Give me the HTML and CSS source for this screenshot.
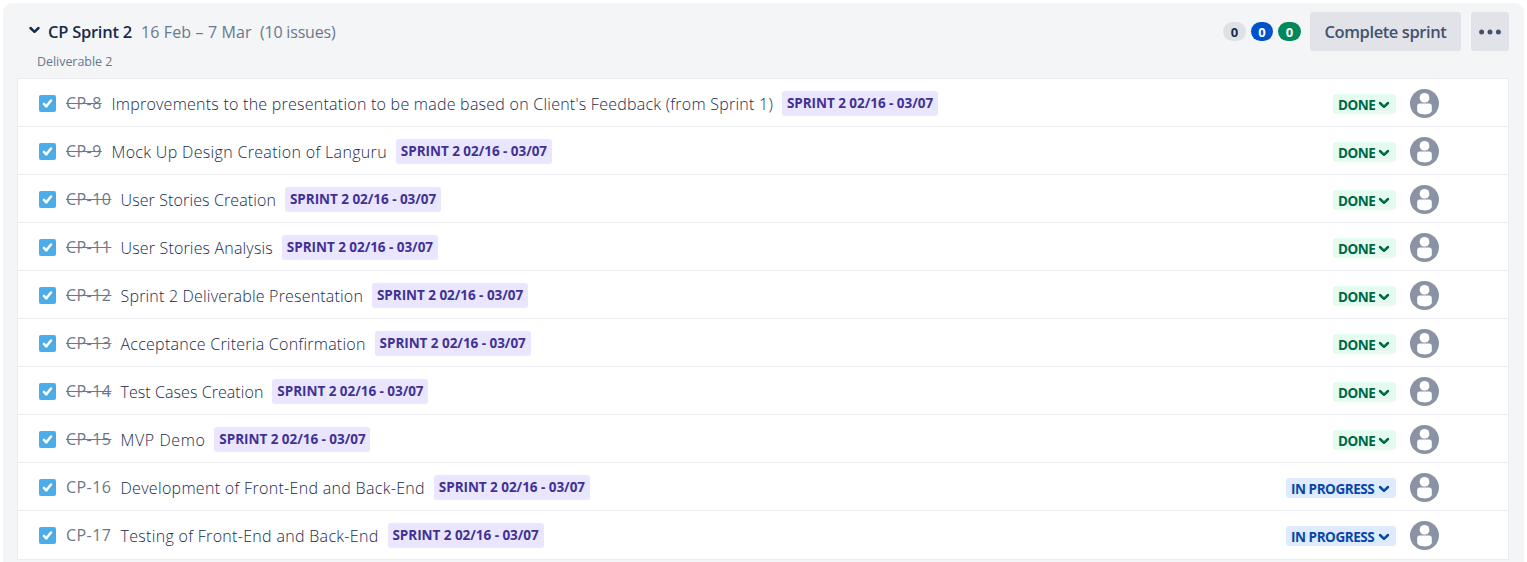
FILE: index.html
```html
<!DOCTYPE html>
<html lang="en">
<head>
<meta charset="utf-8">
<title>CP Sprint 2</title>
<link rel="stylesheet" href="styles.css">
</head>
<body>
<svg class="defs" aria-hidden="true">
  <symbol id="task" viewBox="0 0 17 17"><rect width="17" height="17" rx="2" fill="#4bade8"/><path d="M4.9 8.9 7.3 11.4 12 5.5" fill="none" stroke="#fff" stroke-width="2.5" stroke-linecap="round" stroke-linejoin="round"/></symbol>
  <symbol id="chev" viewBox="0 0 12 8"><path d="M2 2 6 5.8 10 2" fill="none" stroke="currentColor" stroke-width="2.5" stroke-linecap="round" stroke-linejoin="round"/></symbol>
  <symbol id="user" viewBox="0 0 29 29"><circle cx="14.5" cy="14.5" r="14.5" fill="#8993a4"/><circle cx="14.5" cy="8.8" r="4.9" fill="#fff"/><path d="M7.2 17a2.6 2.6 0 0 1 2.6-2.6h9.4a2.6 2.6 0 0 1 2.6 2.6v4.6c0 2.5-3.4 3.9-7.3 3.9s-7.3-1.4-7.3-3.9z" fill="#fff"/></symbol>
</svg>
<main class="sprint">
  <header class="head">
    <svg class="toggle"><use href="#chev"/></svg>
    <h1 class="name">CP Sprint 2</h1>
    <span class="dates">16 Feb – 7 Mar</span>
    <span class="count">(10 issues)</span>
    <div class="actions">
      <span class="pill todo">0</span><span class="pill doing">0</span><span class="pill complete">0</span>
      <button class="btn finish">Complete sprint</button>
      <button class="btn more" aria-label="More"><svg width="22" height="6" viewBox="0 0 22 6"><g fill="#42526e"><circle cx="2.6" cy="3" r="2.5"/><circle cx="11" cy="3" r="2.5"/><circle cx="19.4" cy="3" r="2.5"/></g></svg></button>
    </div>
  </header>
  <p class="goal">Deliverable 2</p>
  <section class="list">
    <div class="row"><svg class="task"><use href="#task"/></svg><span class="key short closed">CP-8</span><span class="summary">Improvements to the presentation to be made based on Client's Feedback (from Sprint 1)</span><span class="tag">SPRINT 2 02/16 - 03/07</span><span class="status done">DONE<svg class="chev"><use href="#chev"/></svg></span><svg class="user"><use href="#user"/></svg></div>
    <div class="row"><svg class="task"><use href="#task"/></svg><span class="key short closed">CP-9</span><span class="summary">Mock Up Design Creation of Languru</span><span class="tag">SPRINT 2 02/16 - 03/07</span><span class="status done">DONE<svg class="chev"><use href="#chev"/></svg></span><svg class="user"><use href="#user"/></svg></div>
    <div class="row"><svg class="task"><use href="#task"/></svg><span class="key closed">CP-10</span><span class="summary">User Stories Creation</span><span class="tag">SPRINT 2 02/16 - 03/07</span><span class="status done">DONE<svg class="chev"><use href="#chev"/></svg></span><svg class="user"><use href="#user"/></svg></div>
    <div class="row"><svg class="task"><use href="#task"/></svg><span class="key closed">CP-11</span><span class="summary">User Stories Analysis</span><span class="tag">SPRINT 2 02/16 - 03/07</span><span class="status done">DONE<svg class="chev"><use href="#chev"/></svg></span><svg class="user"><use href="#user"/></svg></div>
    <div class="row"><svg class="task"><use href="#task"/></svg><span class="key closed">CP-12</span><span class="summary">Sprint 2 Deliverable Presentation</span><span class="tag">SPRINT 2 02/16 - 03/07</span><span class="status done">DONE<svg class="chev"><use href="#chev"/></svg></span><svg class="user"><use href="#user"/></svg></div>
    <div class="row"><svg class="task"><use href="#task"/></svg><span class="key closed">CP-13</span><span class="summary">Acceptance Criteria Confirmation</span><span class="tag">SPRINT 2 02/16 - 03/07</span><span class="status done">DONE<svg class="chev"><use href="#chev"/></svg></span><svg class="user"><use href="#user"/></svg></div>
    <div class="row"><svg class="task"><use href="#task"/></svg><span class="key closed">CP-14</span><span class="summary">Test Cases Creation</span><span class="tag">SPRINT 2 02/16 - 03/07</span><span class="status done">DONE<svg class="chev"><use href="#chev"/></svg></span><svg class="user"><use href="#user"/></svg></div>
    <div class="row"><svg class="task"><use href="#task"/></svg><span class="key closed">CP-15</span><span class="summary">MVP Demo</span><span class="tag">SPRINT 2 02/16 - 03/07</span><span class="status done">DONE<svg class="chev"><use href="#chev"/></svg></span><svg class="user"><use href="#user"/></svg></div>
    <div class="row"><svg class="task"><use href="#task"/></svg><span class="key">CP-16</span><span class="summary">Development of Front-End and Back-End</span><span class="tag">SPRINT 2 02/16 - 03/07</span><span class="status progress">IN PROGRESS<svg class="chev"><use href="#chev"/></svg></span><svg class="user"><use href="#user"/></svg></div>
    <div class="row"><svg class="task"><use href="#task"/></svg><span class="key">CP-17</span><span class="summary">Testing of Front-End and Back-End</span><span class="tag">SPRINT 2 02/16 - 03/07</span><span class="status progress">IN PROGRESS<svg class="chev"><use href="#chev"/></svg></span><svg class="user"><use href="#user"/></svg></div>
  </section>
</main>
</body>
</html>
```

FILE: styles.css
```css
* { box-sizing: border-box; }
body { margin: 0; height: 562px; overflow: hidden; padding: 3px 3px 0; background: #fff; color: #172b4d; font-family: "Open Sans", "Noto Sans", sans-serif; font-size: 16px; }
.defs { position: absolute; width: 0; height: 0; }
svg { flex: none; display: block; }
.sprint { height: 570px; padding: 9px 15px 0 14px; background: #f4f5f7; border-radius: 9px; }
.head { display: flex; align-items: center; height: 39px; padding-left: 11px; white-space: nowrap; }
.toggle { width: 13px; height: 8px; margin: 0 7px 3px 0; }
.name { margin: 0 10px 0 0; font-size: 16.5px; font-weight: 600; width: 83px; letter-spacing: -0.25px; }
.dates { width: 110px; margin-right: 9px; color: #6b778c; letter-spacing: 0.13px; }
.count { color: #6b778c; letter-spacing: -0.2px; }
.actions { display: flex; align-items: center; margin-left: auto; }
.pill { width: 23px; height: 19px; margin-right: 5px; border-radius: 10px; font-size: 13px; font-weight: 700; line-height: 21px; text-align: center; }
.todo { background: #dfe1e6; color: #172b4d; }
.doing { width: 22px; background: #0052cc; color: #fff; }
.complete { background: #00875a; color: #fff; margin-right: 9px; }
.btn { display: flex; align-items: center; justify-content: center; height: 39px; padding: 0; border: 0; border-radius: 3px; background: #e2e3e9; color: #42526e; font: 550 16.5px "Open Sans", sans-serif; }
.finish { width: 151px; margin-right: 10px; letter-spacing: -0.4px; }
.more { width: 38px; }
.goal { height: 27px; margin: 0; padding: 2px 0 0 20px; color: #6b778c; font-size: 12.5px; line-height: 18px; letter-spacing: -0.05px; }
.list { border: 1px solid #ebecf0; background: #fff; }
.row { display: flex; align-items: center; height: 48px; padding: 0 69px 0 21px; border-bottom: 1px solid #ebecf0; white-space: nowrap; }
.row:last-child { border-bottom-color: #fff; }
.task { width: 17px; height: 17px; margin: 2px 10px 0 0; }
.key { width: 45px; margin-right: 9.5px; color: #6b778c; font-weight: 380; letter-spacing: 0.45px; }
.short { width: 36px; }
.closed { text-decoration: line-through; }
.summary { margin-right: 9px; padding-top: 2px; font-weight: 350; letter-spacing: 0.245px; }
.row:nth-child(2) .summary { letter-spacing: 0.33px; }
.row:nth-child(3) .summary { letter-spacing: 0.12px; }
.row:nth-child(4) .summary { letter-spacing: 0.17px; }
.row:nth-child(5) .summary { letter-spacing: 0.19px; }
.row:nth-child(6) .summary { letter-spacing: 0.25px; }
.row:nth-child(7) .summary { letter-spacing: 0.07px; }
.row:nth-child(8) .summary { letter-spacing: 0.6px; }
.row:nth-child(9) .summary { letter-spacing: 0.31px; }
.row:nth-child(10) .summary { letter-spacing: 0.31px; }
.tag { width: 156px; height: 25px; margin-top: 1px; border-radius: 3px; background: #eae6ff; color: #403294; font-size: 13.5px; font-weight: 680; line-height: 24px; text-align: center; letter-spacing: -0.04px; }
.status { display: flex; align-items: center; height: 20px; margin: 2px 14px 0 auto; padding: 2px 6px 0 5px; border-radius: 3px; font-size: 13.5px; font-weight: 680; letter-spacing: -0.45px; }
.done { width: 63px; background: #e3fcef; color: #006644; }
.progress { width: 110px; background: #deebff; color: #0747a6; }
.chev { width: 12px; height: 8px; margin-left: auto; }
.user { width: 29px; height: 29px; margin-top: 2px; }
```
